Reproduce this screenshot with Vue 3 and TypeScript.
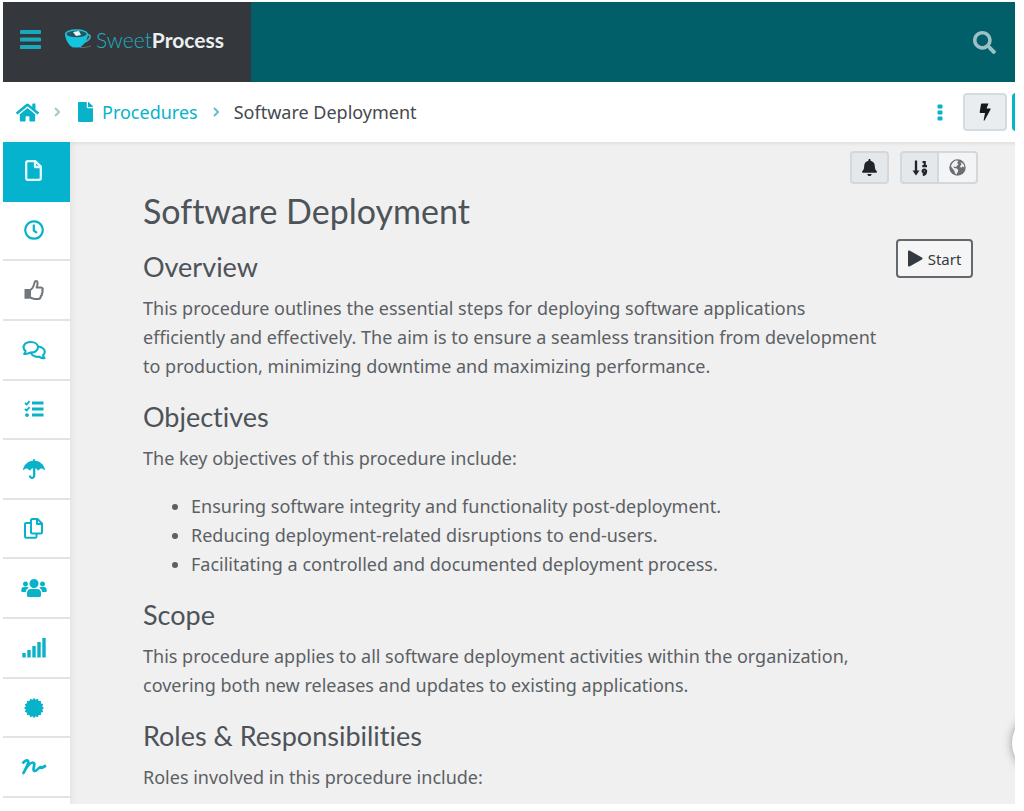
<script setup lang="ts">
interface Shape {
  d: string
  line?: number
}
interface Icon {
  box: string
  w: number
  h: number
  shapes: Shape[]
}
interface NavItem {
  label: string
  icon: Icon
  active?: boolean
  muted?: boolean
}

const burst = (): string => {
  const points: string[] = []
  for (let i = 0; i < 32; i++) {
    const r = i % 2 === 0 ? 12 : 10
    const a = (i * Math.PI) / 16
    points.push(`${(12 + r * Math.cos(a)).toFixed(2)} ${(12 + r * Math.sin(a)).toFixed(2)}`)
  }
  return `M${points.join('L')}Z`
}

const navItems: NavItem[] = [
  {
    label: 'Document',
    active: true,
    icon: {
      box: '0 0 17 21', w: 17, h: 21,
      shapes: [{ d: 'M3 1.200H10.500L15.800 6.500V18Q15.800 19.800 14 19.800H3Q1.200 19.800 1.200 18V3Q1.200 1.200 3 1.200ZM10 1.500V7H15.500', line: 2.300 }],
    },
  },
  {
    label: 'History',
    icon: {
      box: '0 0 20 20', w: 20, h: 20,
      shapes: [
        { d: 'M10 1.300a8.700 8.700 0 1 0 .01 0Z', line: 2.200 },
        { d: 'M9.800 4.500V10.500L13 12.800', line: 2.200 },
      ],
    },
  },
  {
    label: 'Approvals',
    muted: true,
    icon: {
      box: '0 0 20 20', w: 20, h: 20,
      shapes: [
        { d: 'M.5 9h5v9.800H.5z' },
        { d: 'M6 10C8 9.500 9.500 6 10 4.500C10.400 2.500 10.800 1 12 1C14 1 14 4 12.600 7.500H17C18.800 7.500 19.300 9.300 18.200 10.400C19 11.500 18.700 12.800 17.800 13.400C18.200 14.600 17.600 15.600 16.800 16C16.800 18 16 18.900 14.200 18.900H11C9 18.900 8 18 6 17.600Z', line: 2 },
      ],
    },
  },
  {
    label: 'Comments',
    icon: {
      box: '0 0 24 20', w: 24, h: 20,
      shapes: [
        { d: 'M2.200 14C3 13 3.500 12 3.600 11C-.5 7.500 2 2 8.700 2C13 2 16 4.300 16 7.300C16 10.700 12.500 12.900 8 12.600C6 13.600 4 14.100 2.200 14Z', line: 2.100 },
        { d: 'M8.800 13C11 17 15.500 17.200 17 16.600C18.700 17.800 20.500 18.500 22.500 18.200C21.600 17.200 21.200 16.200 21 15.200C24.200 12.500 23 7.300 16.200 6.500', line: 2.100 },
      ],
    },
  },
  {
    label: 'Tasks',
    icon: {
      box: '0 0 20 18', w: 20, h: 18,
      shapes: [
        { d: 'M8 3H19.500M8 9H19.500M8 15H19.500', line: 3 },
        { d: 'M1 3L2.700 4.500L5.500 1.200M1 9L2.700 10.500L5.500 7.200', line: 1.900 },
        { d: 'M3 13.200a1.900 1.900 0 1 0 .01 0Z' },
      ],
    },
  },
  {
    label: 'Policies',
    icon: {
      box: '0 0 22 20', w: 22, h: 20,
      shapes: [
        { d: 'M10 1.800V1a1 1 0 0 1 2 0v.8C17 2.200 20.800 5.500 22 10.500C22 11.200 21.500 11.300 21 10.800C19.300 8.900 17.300 9 15.700 11.200C15.400 11.700 15 11.600 14.700 11.200C12.700 8.300 9.300 8.300 7.300 11.200C7 11.600 6.600 11.700 6.300 11.200C4.700 9 2.700 8.900 1 10.800C.5 11.300 0 11.200 0 10.500C1.200 5.500 5 2.200 10 1.800Z' },
        { d: 'M11.200 9V16.500C11.200 19.700 6.800 19.500 7 16.500', line: 2.300 },
      ],
    },
  },
  {
    label: 'Templates',
    icon: {
      box: '0 0 19 21', w: 19, h: 21,
      shapes: [
        { d: 'M8 1H13.500L18 5.500V14.500Q18 15.500 17 15.500H8Q7 15.500 7 14.500V2Q7 1 8 1ZM13 1V6H18', line: 2 },
        { d: 'M6.500 5H2Q1 5 1 6V18.500Q1 19.700 2 19.700H11Q12.500 19.700 12.500 18.500V16', line: 2 },
      ],
    },
  },
  {
    label: 'Teams',
    icon: {
      box: '0 0 26 20', w: 26, h: 20,
      shapes: [
        { d: 'M13 1a4.500 4.500 0 1 0 .01 0ZM10 11H16Q20 11 20 15V17.500Q20 19 18.500 19H7.500Q6 19 6 17.500V15Q6 11 10 11Z' },
        { d: 'M4.500 3.500a2.500 2.500 0 1 0 .01 0ZM21.500 3.500a2.500 2.500 0 1 0 .01 0ZM3 9H6Q7 9 7.700 9.800Q5 11 4.700 14H1Q.3 14 .3 13V12Q.3 9 3 9ZM23 9H20Q19 9 18.300 9.800Q21 11 21.300 14H25Q25.700 14 25.700 13V12Q25.700 9 23 9Z' },
      ],
    },
  },
  {
    label: 'Reports',
    icon: {
      box: '0 0 24 21', w: 24, h: 21,
      shapes: [{ d: 'M2 16V20.500M7 13V20.500M12 9V20.500M17 5V20.500M22 1V20.500', line: 3.400 }],
    },
  },
  { label: 'Certificates', icon: { box: '0 0 24 24', w: 20, h: 20, shapes: [{ d: burst() }] } },
  {
    label: 'Signatures',
    icon: {
      box: '0 0 26 18', w: 26, h: 18,
      shapes: [{ d: 'M1.500 5.500C4 2.500 6.500 1.500 7.200 3C8 5 4.500 11 2.500 15C5 10 9 4.500 12 4.500C15.500 4.500 10.500 12.500 13.500 13C16 13.300 18.500 8.500 19.500 9C20.300 9.500 18.500 11.500 25 7.500', line: 2.700 }],
    },
  },
]

const objectives: string[] = [
  'Ensuring software integrity and functionality post-deployment.',
  'Reducing deployment-related disruptions to end-users.',
  'Facilitating a controlled and documented deployment process.',
]
</script>

<template>
  <div class="page">
    <div class="app">
      <header class="topbar">
        <div class="brand">
          <button class="plain" aria-label="Menu">
            <svg class="menu" viewBox="0 0 21 19" width="21" height="19"><path d="M1.500 2H19.500M1.500 9.500H19.500M1.500 17H19.500" /></svg>
          </button>
          <a class="logo" href="#">
            <svg viewBox="0 0 27 20" width="27" height="20">
              <path d="M20 6C27 4 27 10.500 18 13.500" fill="none" stroke="#4a9faf" stroke-width="2" />
              <path d="M0 4.500C0 11 5 18.500 9 18.500H14C18 17.500 23 11 23 4.500Z" fill="#12c4df" />
              <ellipse cx="11.500" cy="5" rx="10.800" ry="4" fill="#205765" stroke="#25bfd4" stroke-width="1.400" />
              <path d="M8 3L14 2L16 6L11 7Z" fill="#e6f7f8" />
              <path d="M15 18.500C19 18.800 23 18 26 17" fill="none" stroke="#656b70" />
            </svg>
            <span class="sweet">Sweet</span><span class="process">Process</span>
          </a>
        </div>
        <button class="plain search" aria-label="Search">
          <svg viewBox="0 0 512 512" width="23" height="23"><path fill="currentColor" d="M505 442.700L405.300 343c-4.500-4.500-10.600-7-17-7H372c27.600-35.300 44-79.700 44-128C416 93.100 322.900 0 208 0S0 93.100 0 208s93.100 208 208 208c48.300 0 92.700-16.400 128-44v16.300c0 6.400 2.500 12.500 7 17l99.700 99.700c9.400 9.400 24.600 9.400 33.900 0l28.300-28.300c9.400-9.400 9.400-24.600.1-34zM208 336c-70.700 0-128-57.200-128-128 0-70.700 57.200-128 128-128 70.700 0 128 57.200 128 128 0 70.700-57.200 128-128 128z" /></svg>
        </button>
      </header>

      <div class="crumbbar">
        <nav class="crumbs" aria-label="Breadcrumb">
          <a href="#" aria-label="Home">
            <svg viewBox="0 0 576 512" width="23" height="21"><path fill="currentColor" d="M280.370 148.260L96 300.110V464a16 16 0 0 0 16 16l112.060-.29a16 16 0 0 0 15.920-16V368a16 16 0 0 1 16-16h64a16 16 0 0 1 16 16v95.640a16 16 0 0 0 16 16.050L464 480a16 16 0 0 0 16-16V300L295.670 148.260a12.190 12.190 0 0 0-15.300 0zM571.600 251.470L488 182.560V44.050a12 12 0 0 0-12-12h-56a12 12 0 0 0-12 12v72.610L318.470 43a48 48 0 0 0-61 0L4.340 251.470a12 12 0 0 0-1.600 16.900l25.500 31A12 12 0 0 0 45.150 301l235.220-193.740a12.190 12.190 0 0 1 15.300 0L530.900 301a12 12 0 0 0 16.900-1.600l25.500-31a12 12 0 0 0-1.700-16.930z" /></svg>
          </a>
          <svg class="chevron faint" viewBox="0 0 6 10" width="6" height="10"><path d="M1 1L5 5L1 9" /></svg>
          <a href="#" class="section">
            <svg viewBox="0 0 384 512" width="15" height="20"><path fill="currentColor" d="M224 136V0H24C10.700 0 0 10.700 0 24v464c0 13.300 10.700 24 24 24h336c13.300 0 24-10.700 24-24V160H248c-13.200 0-24-10.800-24-24zm160-14.100v6.100H256V0h6.100c6.400 0 12.500 2.500 17 7l97.900 98c4.500 4.500 7 10.600 7 16.900z" /></svg>
            Procedures
          </a>
          <svg class="chevron" viewBox="0 0 6 10" width="6" height="10"><path d="M1 1L5 5L1 9" /></svg>
          <span class="current">Software Deployment</span>
        </nav>
        <div class="crumb-actions">
          <button class="plain dots" aria-label="More options">
            <svg viewBox="0 0 6 17" width="6" height="17"><path fill="currentColor" d="M.5 1.500Q.5.500 1.500.500H4.500Q5.500.500 5.500 1.500V3.500Q5.500 4.500 4.500 4.500H1.500Q.5 4.500.5 3.500ZM.5 7.500Q.5 6.500 1.500 6.500H4.500Q5.500 6.500 5.500 7.500V9.500Q5.500 10.500 4.500 10.500H1.500Q.5 10.500.5 9.500ZM.5 13.500Q.5 12.500 1.500 12.500H4.500Q5.500 12.500 5.500 13.500V15.500Q5.500 16.500 4.500 16.500H1.500Q.5 16.500.5 15.500Z" /></svg>
          </button>
          <button class="bolt" aria-label="Quick actions">
            <svg viewBox="0 0 12 18" width="12" height="18"><path fill="currentColor" d="M3 .5H9.500L7.500 5.500H11Q12 5.500 11.500 6.500L5.500 17.500Q4.500 18 4.700 17L6 10H1.500Q.5 10 .7 9L2 1.200Q2.200.5 3 .5Z" /></svg>
          </button>
          <button class="primary" aria-label="Edit"></button>
        </div>
      </div>

      <div class="body">
        <nav class="sidebar" aria-label="Procedure sections">
          <a v-for="item in navItems" :key="item.label" href="#" class="side-item" :class="{ active: item.active, muted: item.muted }" :aria-label="item.label">
            <svg :viewBox="item.icon.box" :width="item.icon.w" :height="item.icon.h">
              <path
                v-for="(shape, i) in item.icon.shapes"
                :key="i"
                :d="shape.d"
                :fill="shape.line ? 'none' : 'currentColor'"
                :stroke="shape.line ? 'currentColor' : 'none'"
                :stroke-width="shape.line ?? 0"
                stroke-linejoin="round"
              />
            </svg>
          </a>
        </nav>

        <main class="main">
          <div class="toolbar">
            <button class="tool pressed" aria-label="Notifications">
              <svg viewBox="0 0 448 512" width="15" height="17"><path fill="currentColor" d="M224 512c35.320 0 63.970-28.650 63.970-64H160.030c0 35.350 28.650 64 63.970 64zm215.390-149.710c-19.320-20.760-55.470-51.990-55.470-154.290 0-77.700-54.480-139.900-127.940-155.160V32c0-17.670-14.320-32-31.980-32s-31.980 14.330-31.980 32v20.840C118.560 68.100 64.080 130.300 64.080 208c0 102.300-36.150 133.530-55.470 154.290-6 6.450-8.660 14.160-8.610 21.710.11 16.400 12.980 32 32.100 32h383.800c19.120 0 32-15.600 32.100-32 .05-7.550-2.610-15.270-8.610-21.710z" /></svg>
            </button>
            <div class="group">
              <button class="tool pressed" aria-label="Numbered order">
                <svg viewBox="0 0 16 16" width="16" height="16" fill="none" stroke="currentColor">
                  <path d="M4 .5V12" stroke-width="2.300" />
                  <path d="M.5 10.500H7.500L4 15.500Z" fill="currentColor" stroke="none" />
                  <path d="M10.500 2H12.700V6.200M10.300 6.200H15" stroke-width="2.200" />
                  <path d="M12.300 9.500a1.600 1.600 0 1 0 .01 0ZM14 10.500Q14.500 14 10.800 15" stroke-width="2.200" />
                </svg>
              </button>
              <button class="tool" aria-label="Public access">
                <svg viewBox="0 0 17 17" width="17" height="17">
                  <circle cx="8.500" cy="8.500" r="8.200" fill="#6b6f73" />
                  <path d="M6.500 1.500L9.500 1.800L8 4L9.500 5L7 8L4.500 7.500L5 9L8 9.500L9.300 11.500L7.500 15.500Q5.500 14.500 5.500 12L2 7.500Q2.500 4 6.500 1.500ZM11.500 3L14.500 5L15.500 8.500L13.500 7.500L12 9L11 7L12.500 5.500Z" fill="#f0f2f3" />
                </svg>
              </button>
            </div>
          </div>

          <div class="content">
            <article class="doc">
              <h1>Software Deployment</h1>
              <h2>Overview</h2>
              <p>This procedure outlines the essential steps for deploying software applications efficiently and effectively. The aim is to ensure a seamless transition from development to production, minimizing downtime and maximizing performance.</p>
              <h2>Objectives</h2>
              <p>The key objectives of this procedure include:</p>
              <ul>
                <li v-for="objective in objectives" :key="objective">{{ objective }}</li>
              </ul>
              <h2>Scope</h2>
              <p>This procedure applies to all software deployment activities within the organization, covering both new releases and updates to existing applications.</p>
              <h2>Roles &amp; Responsibilities</h2>
              <p>Roles involved in this procedure include:</p>
            </article>
            <button class="start">
              <svg viewBox="0 0 15 17" width="15" height="17"><path fill="currentColor" d="M0 1.500Q0 0 1.500.6L14 7.500Q15 8.500 14 9.500L1.500 16.400Q0 17 0 15.500Z" /></svg>
              Start
            </button>
          </div>
        </main>
      </div>
      <button class="chat" aria-label="Open chat"></button>
    </div>
  </div>
</template>

<style>
body {
  margin: 0;
  background: #fff;
}
</style>

<style scoped>
* {
  box-sizing: border-box;
}
svg {
  display: block;
  flex: none;
}
button {
  margin: 0;
  padding: 0;
  font: inherit;
  cursor: pointer;
}
a {
  color: #08b3ca;
  text-decoration: none;
}
.page {
  display: flex;
  min-height: 100vh;
  padding: 2px 9px 7px 3px;
  font-family: "Noto Sans", "Open Sans", sans-serif;
  font-size: 18px;
  color: #5b6065;
}
.app {
  position: relative;
  display: flex;
  flex: 1;
  flex-direction: column;
  min-width: 0;
  overflow: hidden;
}
.plain {
  border: 0;
  background: none;
}
.topbar {
  display: flex;
  align-items: center;
  justify-content: space-between;
  height: 80px;
  background: #005f68;
}
.brand {
  display: flex;
  align-items: center;
  gap: 24px;
  width: 248px;
  height: 100%;
  padding: 0 0 6px 17px;
  background: #34383d;
}
.menu {
  fill: none;
  stroke: #19a9bd;
  stroke-width: 4;
  stroke-linecap: round;
}
.logo {
  display: flex;
  align-items: center;
  font-family: Lato, sans-serif;
  font-size: 21px;
}
.sweet {
  margin-left: 4px;
  font-weight: 300;
  color: #1fb0c2;
}
.process {
  font-weight: 700;
  color: #eceff0;
}
.search {
  margin-right: 19px;
  color: #9cc0c5;
}
.crumbbar {
  display: flex;
  align-items: center;
  justify-content: space-between;
  height: 60px;
  padding-left: 13px;
  background: #fff;
}
.crumbs,
.section {
  display: flex;
  align-items: center;
}
.crumbs {
  gap: 15px;
}
.section {
  gap: 9px;
  margin-left: 3px;
}
.chevron {
  fill: none;
  stroke: #64bfca;
  stroke-width: 2;
}
.faint {
  stroke: #a3c9ce;
}
.current {
  color: #45494e;
}
.crumb-actions {
  display: flex;
  align-items: center;
  height: 38px;
  width: 78px;
}
.dots {
  margin-right: 20px;
  color: #08b3ca;
}
.bolt {
  display: grid;
  flex: none;
  place-items: center;
  width: 44px;
  height: 38px;
  margin-right: 5px;
  border: 2px solid #d5dce1;
  border-radius: 4px;
  background: #e9edf0;
  color: #15181c;
}
.primary {
  flex: none;
  width: 44px;
  height: 38px;
  border: 0;
  border-radius: 4px;
  background: #08b3ca;
}
.body {
  display: flex;
  flex: 1;
}
.sidebar {
  z-index: 1;
  display: flex;
  flex: none;
  flex-direction: column;
  width: 67px;
  padding-bottom: 6px;
  background: #fff;
  box-shadow: 0 0 8px #00000018;
}
.side-item {
  display: flex;
  flex: 1;
  align-items: center;
  justify-content: center;
  min-height: 48px;
  padding-right: 6px;
  border-bottom: 2px solid #e2e3e4;
}
.active {
  border-color: #05b3ce;
  background: #05b3ce;
  color: #e4fafd;
}
.muted {
  color: #71777b;
}
.main {
  flex: 1;
  min-width: 0;
  padding: 9px 0 0 73px;
  background: #f0f0f0;
  box-shadow: inset 0 5px 5px -4px #00000018;
}
.toolbar {
  display: flex;
  justify-content: flex-end;
  gap: 11px;
  padding-right: 37px;
}
.group {
  display: flex;
}
.tool {
  display: grid;
  place-items: center;
  width: 39px;
  height: 33px;
  border: 2px solid #d2d8dc;
  border-radius: 4px;
  background: #f3f4f5;
  color: #20252b;
}
.pressed {
  background: #e5e8ea;
}
.group .tool:first-child {
  border-radius: 4px 0 0 4px;
}
.group .tool:last-child {
  border-left: 0;
  border-radius: 0 4px 4px 0;
}
.content {
  display: flex;
  align-items: flex-start;
  gap: 8px;
  padding: 4px 42px 0 0;
}
.doc {
  flex: 1;
}
h1,
h2 {
  margin: 0;
  font-family: Lato, sans-serif;
  font-weight: 400;
  font-variant-ligatures: none;
  color: #4d5359;
}
h1 {
  margin-bottom: 17px;
  font-size: 34px;
  line-height: 45px;
}
h2 {
  margin-bottom: 11px;
  font-size: 27px;
  line-height: 33px;
}
p,
ul {
  margin: 0 0 19px;
  line-height: 29px;
}
p:last-child {
  margin-bottom: 0;
}
ul {
  padding-left: 48px;
}
.start {
  display: flex;
  flex: none;
  align-items: center;
  justify-content: center;
  gap: 5px;
  width: 77px;
  height: 39px;
  margin-top: 51px;
  border: 2px solid #62686d;
  border-radius: 4px;
  background: #f5f5f5;
  color: #343a40;
  font-size: 15px;
}
.chat {
  position: absolute;
  right: -57px;
  bottom: 31px;
  width: 60px;
  height: 60px;
  border: 0;
  border-radius: 50%;
  background: #fff;
  box-shadow: 0 0 10px #00000060;
}
</style>
